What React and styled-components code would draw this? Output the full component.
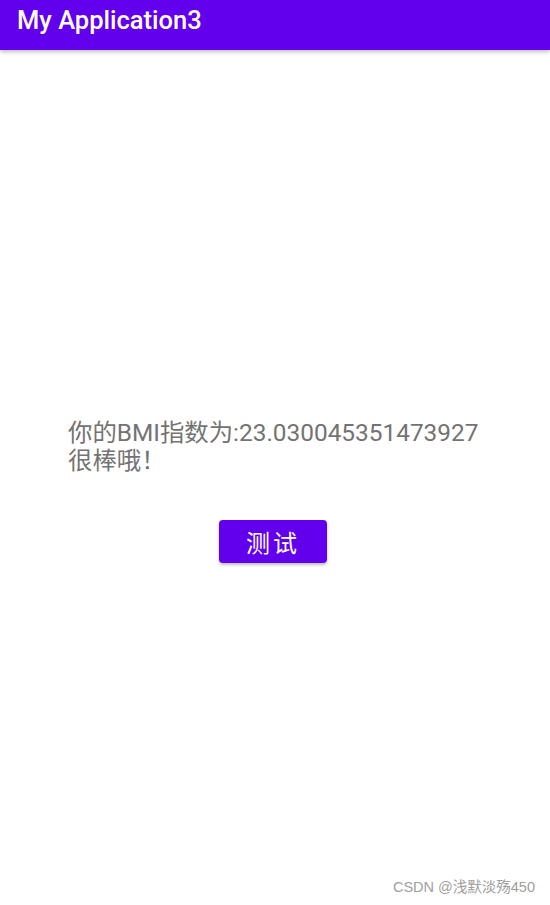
import React from 'react';
import styled, { createGlobalStyle } from 'styled-components';

const Global = createGlobalStyle`
  html, body {
    margin: 0;
    padding: 0;
    background: #fff;
    font-family: Roboto, "Noto Sans CJK SC", sans-serif;
  }
`;

const Page = styled.div`
  width: 550px;
  height: 905px;
  display: flex;
  flex-direction: column;
  overflow: hidden;
`;

const AppBar = styled.header`
  height: 50px;
  background: #6200ee;
  box-shadow: 0 2px 4px rgba(0, 0, 0, 0.25);
  padding-left: 17px;
  display: flex;
  align-items: flex-start;
  position: relative;
  z-index: 1;
`;

const Title = styled.h1`
  margin: 0;
  margin-top: 4px;
  color: #fff;
  font-size: 25.5px;
  font-weight: 500;
  line-height: 32px;
`;

const Content = styled.main`
  flex: 1;
  display: flex;
  flex-direction: column;
  padding: 369px 0 0 68px;
  position: relative;
`;

const Result = styled.p`
  margin: 0;
  color: #737373;
  font-size: 24.4px;
  line-height: 28px;
`;

const ButtonRow = styled.div`
  display: flex;
  justify-content: center;
  margin-top: 45px;
  padding-right: 72px;
`;

const Button = styled.button`
  width: 108px;
  height: 43px;
  border: none;
  border-radius: 4px;
  background: #6200ee;
  color: #fff;
  font-family: "Noto Sans CJK SC", sans-serif;
  font-size: 24px;
  letter-spacing: 3px;
  box-shadow: 0 2px 3px rgba(0, 0, 0, 0.25);
  cursor: pointer;
`;

const Watermark = styled.span`
  position: absolute;
  right: 15px;
  bottom: 9px;
  color: #a0a0a0;
  font-family: "Liberation Sans", "Noto Sans CJK SC", sans-serif;
  font-size: 14.5px;
`;

export default function App() {
  return (
    <Page>
      <Global />
      <AppBar>
        <Title>My Application3</Title>
      </AppBar>
      <Content>
        <Result>
          你的BMI指数为:23.030045351473927
          <br />
          很棒哦！
        </Result>
        <ButtonRow>
          <Button>测试</Button>
        </ButtonRow>
        <Watermark>CSDN @浅默淡殇450</Watermark>
      </Content>
    </Page>
  );
}
